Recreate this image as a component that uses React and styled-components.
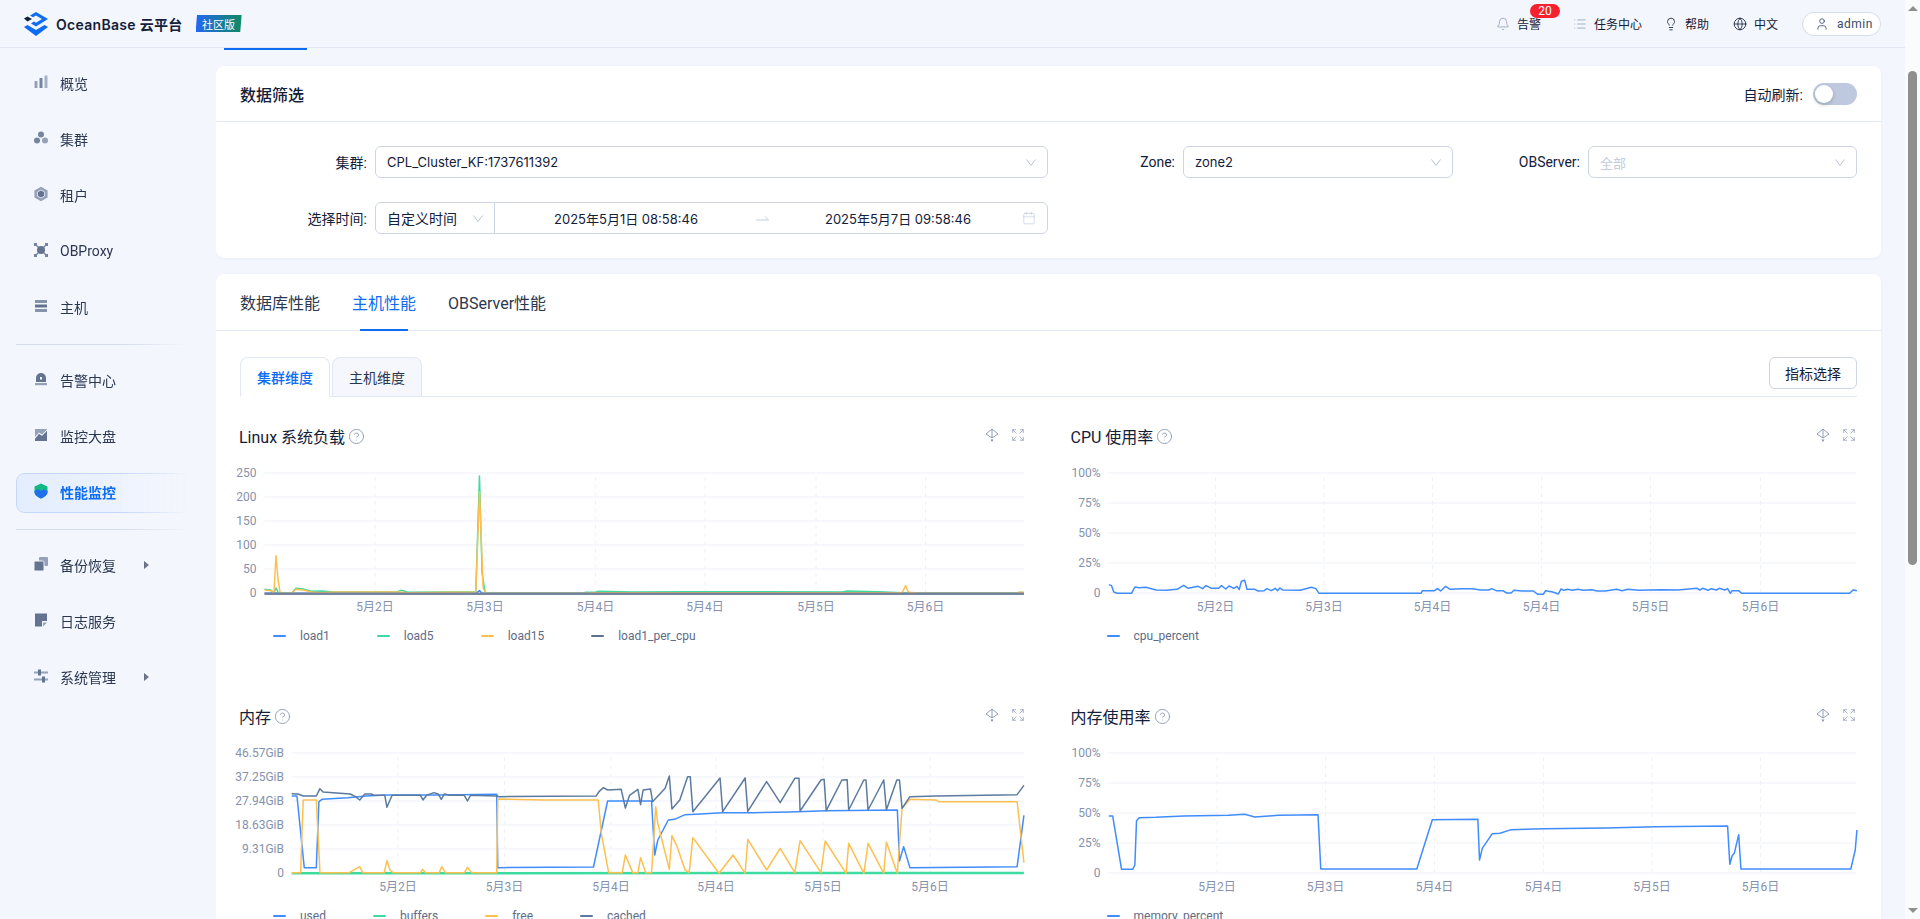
import React from "react"
import styled, { createGlobalStyle } from "styled-components"
import { Bell, List, Lightbulb, Globe, User, Calendar, CircleHelp, Expand } from "lucide-react"

const GlobalStyle = createGlobalStyle`
  html, body {
    margin: 0;
    height: 100%;
    overflow: hidden;
  }
  body {
    background: #f3f6fd;
    color: #132039;
    font-family: Roboto, "Noto Sans CJK SC", sans-serif;
    font-size: 14px;
  }
  * { box-sizing: border-box; }
`

const Shell = styled.div`
  display: flex;
  height: 100vh;
  overflow: hidden;
`

const Page = styled.div`
  flex: 1;
  min-width: 0;
  display: flex;
  flex-direction: column;
`

const TopBar = styled.header`
  height: 48px;
  flex: none;
  display: flex;
  align-items: center;
  justify-content: space-between;
  padding: 0 24px;
  border-bottom: 1px solid #e2e8f3;
`

const Brand = styled.div`
  display: flex;
  align-items: center;
`

const BrandName = styled.span`
  margin-left: 8px;
  font-family: Inter, "Noto Sans CJK SC", sans-serif;
  font-size: 14px;
  font-weight: 600;
  letter-spacing: 0.3px;
  color: #132039;
`

const EditionBadge = styled.span`
  margin-left: 13px;
  width: 46px;
  height: 17px;
  display: flex;
  align-items: center;
  justify-content: center;
  font-size: 11px;
  color: #fff;
  background: linear-gradient(90deg, #2468f2 0%, #0f8a5f 100%);
  clip-path: polygon(3% 0, 100% 0, 97% 100%, 0 100%);
`

const TopActions = styled.div`
  display: flex;
  align-items: center;
  font-size: 12px;
  color: #132039;
`

const TopAction = styled.div`
  position: relative;
  display: flex;
  align-items: center;
  gap: 7px;
  margin-right: ${(p) => p.$gap}px;
  color: ${(p) => p.$tone || "#132039"};

  span {
    color: #132039;
  }
`

const CountBadge = styled.b`
  position: absolute;
  top: -11px;
  left: 34px;
  width: 30px;
  height: 14px;
  border-radius: 7px;
  background: #f5222d;
  color: #fff;
  font-size: 12px;
  font-weight: 400;
  line-height: 14px;
  text-align: center;
`

const UserPill = styled.div`
  width: 79px;
  height: 24px;
  display: flex;
  align-items: center;
  gap: 8px;
  padding-left: 12px;
  border: 1px solid #d5dcea;
  border-radius: 12px;
  background: #fff;
  letter-spacing: 0.5px;
  color: #3a4a66;
`

const Body = styled.div`
  flex: 1;
  min-height: 0;
  display: flex;
`

const Sidebar = styled.nav`
  width: 216px;
  flex: none;
  padding: 8px 26px 0 16px;
`

const NavItem = styled.div`
  height: 56px;
  display: flex;
  align-items: center;
`

const NavInner = styled.div`
  width: 100%;
  height: 40px;
  display: flex;
  align-items: center;
  gap: 11px;
  padding: 0 0 2px 16px;
  border: 1px solid ${(p) => (p.$active ? "#c3d7fb" : "transparent")};
  border-radius: 8px;
  background: ${(p) => (p.$active ? "linear-gradient(90deg, #e3edfe 0%, #f3f6fd 100%)" : "none")};
  color: ${(p) => (p.$active ? "#0d6cf2" : "#2a3750")};
  font-weight: ${(p) => (p.$active ? 600 : 400)};
  mask-image: linear-gradient(90deg, #000 60%, transparent 100%);

  svg {
    margin-bottom: 2px;
  }
`

const NavArrow = styled.i`
  margin-left: 17px;
  width: 0;
  height: 0;
  border-left: 5px solid #1c2a44;
  border-top: 4px solid transparent;
  border-bottom: 4px solid transparent;
`

const NavDivider = styled.hr`
  height: 1px;
  margin: 8px 0;
  border: 0;
  background: linear-gradient(90deg, #d5dcea 0%, #d5dcea 60%, #f3f6fd 100%);
`

const Main = styled.main`
  flex: 1;
  min-width: 0;
  padding-right: 24px;
  overflow: hidden;
`

const PageTabInk = styled.div`
  width: 83px;
  height: 2px;
  margin: 0 0 16px 8px;
  background: #0d6cf2;
`

const Card = styled.section`
  background: #fff;
  border-radius: 8px;
  box-shadow: 0 1px 3px rgba(54, 69, 99, 0.06);
  margin-bottom: 16px;
`

const CardHead = styled.div`
  height: 56px;
  display: flex;
  align-items: center;
  justify-content: space-between;
  padding: 0 24px;
  border-bottom: 1px solid #e2e8f3;
`

const CardTitle = styled.h2`
  margin: 0;
  font-size: 16px;
  font-weight: 500;
`

const AutoRefresh = styled.div`
  display: flex;
  align-items: center;
  gap: 10px;
  font-size: 14px;
`

const Toggle = styled.div`
  width: 44px;
  height: 22px;
  padding: 2px;
  border-radius: 11px;
  background: #bec9df;

  &::before {
    content: "";
    display: block;
    width: 18px;
    height: 18px;
    border-radius: 50%;
    background: #fff;
    box-shadow: 0 2px 4px rgba(0, 35, 11, 0.2);
  }
`

const FilterGrid = styled.div`
  display: grid;
  grid-template-columns: 808px 405px 404px;
  row-gap: 24px;
  padding: 24px;
`

const Field = styled.div`
  display: grid;
  grid-template-columns: 135px 1fr;
  align-items: center;
`

const FieldLabel = styled.label`
  padding-right: 8px;
  text-align: right;
  font-size: 14px;
  color: #132039;
`

const SelectBox = styled.div`
  height: 32px;
  display: flex;
  align-items: center;
  justify-content: space-between;
  padding: 0 11px;
  border: 1px solid #cdd5e4;
  border-radius: 6px;
  font-family: Inter, "Noto Sans CJK SC", sans-serif;
  font-size: 13px;
  color: ${(p) => (p.$muted ? "#c3cbdc" : "#132039")};

  svg {
    color: #b8c2d6;
  }
`

const RangeBox = styled.div`
  height: 32px;
  display: flex;
  align-items: center;
  border: 1px solid #cdd5e4;
  border-radius: 6px;
  font-family: Inter, "Noto Sans CJK SC", sans-serif;
  font-size: 13px;
`

const RangeKind = styled.div`
  width: 119px;
  height: 100%;
  flex: none;
  display: flex;
  align-items: center;
  justify-content: space-between;
  padding: 0 11px;
  border-right: 1px solid #cdd5e4;
  font-size: 14px;

  svg {
    color: #b8c2d6;
  }
`

const RangeValue = styled.span`
  width: 246px;
  flex: none;
  text-align: center;

  &:first-of-type {
    margin-left: 8px;
  }
`

const RangeArrow = styled.span`
  width: 26px;
  flex: none;
  display: flex;
  justify-content: center;
  color: #c3cbdc;
`

const RangeIcon = styled.span`
  margin-left: 1px;
  flex: none;
  display: flex;
  color: #b8c2d6;
`

const MainTabs = styled.div`
  height: 57px;
  display: flex;
  gap: 32px;
  padding: 0 24px;
  border-bottom: 1px solid #e2e8f3;
`

const MainTab = styled.div`
  position: relative;
  display: flex;
  align-items: center;
  font-size: 16px;
  color: ${(p) => (p.$active ? "#0d6cf2" : "#2a3750")};

  &::after {
    content: "";
    display: ${(p) => (p.$active ? "block" : "none")};
    position: absolute;
    left: 8px;
    right: 8px;
    bottom: -1px;
    height: 2px;
    background: #0d6cf2;
  }
`

const TabPane = styled.div`
  padding: 26px 24px 0;
`

const SubTabBar = styled.div`
  display: flex;
  align-items: flex-start;
  gap: 2px;
  height: 40px;
  border-bottom: 1px solid #e2e8f3;
`

const SubTab = styled.div`
  width: 90px;
  height: 40px;
  display: flex;
  align-items: center;
  justify-content: center;
  border: 1px solid #e2e8f3;
  border-bottom: ${(p) => (p.$active ? "1px solid #fff" : "1px solid #e2e8f3")};
  border-radius: 8px 8px 0 0;
  background: ${(p) => (p.$active ? "#fff" : "#f5f7fc")};
  color: ${(p) => (p.$active ? "#0d6cf2" : "#2a3750")};
  font-weight: ${(p) => (p.$active ? 500 : 400)};
`

const PickButton = styled.button`
  margin-left: auto;
  width: 88px;
  height: 32px;
  padding: 0;
  border: 1px solid #cdd5e4;
  border-radius: 6px;
  background: #fff;
  color: #132039;
  font: inherit;
`

const ChartGrid = styled.div`
  display: grid;
  grid-template-columns: 1fr 1fr;
  column-gap: 46px;
  padding-top: 28px;
`

const ChartPanel = styled.div`
  height: 280px;
`

const ChartHead = styled.div`
  height: 22px;
  display: flex;
  align-items: center;
  gap: 3px;
  margin: 0 0 13px -1px;
  font-size: 16px;
  color: #132039;
`

const HelpMark = styled(CircleHelp)`
  color: #7d8aa6;
`

const ChartTools = styled.div`
  margin: 0 1px 3px auto;
  display: flex;
  align-items: center;
  gap: 12px;
  color: #8592ad;
`

const ChartSvg = styled.svg`
  display: block;
  width: 100%;
  height: 160px;
  overflow: visible;

  text {
    font-size: 12px;
    fill: #8592ad;
  }
`

const Legend = styled.div`
  display: flex;
  gap: 47px;
  height: 18px;
  margin-top: 7px;
  padding-left: ${(p) => p.$indent}px;
  font-size: 12px;
  color: #5e6b86;
`

const LegendItem = styled.div`
  display: flex;
  align-items: center;
  gap: 14px;

  &::before {
    content: "";
    width: 13px;
    height: 2px;
    border-radius: 1px;
    background: ${(p) => p.$color};
  }
`

const ScrollTrack = styled.div`
  width: 15px;
  flex: none;
  display: flex;
  flex-direction: column;
  align-items: center;
  padding: 6px 0;
  background: #fafbfc;
`

const ScrollUp = styled.i`
  width: 0;
  height: 0;
  border-left: 5px solid transparent;
  border-right: 5px solid transparent;
  border-bottom: 5px solid #8f8f8f;
`

const ScrollDown = styled.i`
  margin-top: auto;
  width: 0;
  height: 0;
  border-left: 5px solid transparent;
  border-right: 5px solid transparent;
  border-top: 5px solid #8f8f8f;
`

const ScrollThumb = styled.div`
  width: 9px;
  height: 494px;
  margin-top: 60px;
  border-radius: 5px;
  background: #8f8f8f;
`

const NavSvg = ({ children }) => (
  <svg width="16" height="16" viewBox="0 0 16 16" fill="#76859f">
    {children}
  </svg>
)

const icons = {
  overview: (
    <NavSvg>
      <rect x="1.5" y="7" width="3" height="7" rx="0.5" fill="#94a1b8" />
      <rect x="6.5" y="4" width="3" height="10" rx="0.5" />
      <rect x="11.5" y="1.5" width="3" height="12.5" rx="0.5" fill="#a5b1c6" />
    </NavSvg>
  ),
  cluster: (
    <NavSvg>
      <circle cx="8" cy="4.5" r="3" />
      <circle cx="4" cy="10.5" r="3" />
      <circle cx="12" cy="10.5" r="3" fill="#94a1b8" />
    </NavSvg>
  ),
  tenant: (
    <NavSvg>
      <path d="M8 .8 14.6 4.4v7.2L8 15.2 1.4 11.6V4.4z" fill="#94a1b8" />
      <path d="M8 4 11.6 6v4L8 12 4.4 10V6z" fill="#64738f" stroke="#dbe2ee" />
    </NavSvg>
  ),
  proxy: (
    <NavSvg>
      <path d="M2.5 2.5 13.5 13.5M13.5 2.5 2.5 13.5" stroke="#76859f" strokeWidth="1.4" />
      <circle cx="8" cy="8" r="4" fill="#64738f" />
      <rect x="1" y="1" width="3" height="3" />
      <rect x="12" y="1" width="3" height="3" />
      <rect x="1" y="12" width="3" height="3" />
      <rect x="12" y="12" width="3" height="3" />
    </NavSvg>
  ),
  host: (
    <NavSvg>
      <rect x="2" y="2" width="12" height="3" fill="#8593ab" />
      <rect x="2" y="6.5" width="12" height="3" fill="#64738f" />
      <rect x="2" y="11" width="12" height="3" fill="#8593ab" />
    </NavSvg>
  ),
  alarm: (
    <NavSvg>
      <path d="M3 11V7a5 5 0 0 1 10 0v4z" fill="#64738f" />
      <rect x="7" y="6" width="2" height="2.5" fill="#f3f6fd" />
      <rect x="2" y="12" width="12" height="2.2" fill="#94a1b8" />
    </NavSvg>
  ),
  board: (
    <NavSvg>
      <rect x="2" y="2" width="12" height="12" fill="#94a1b8" />
      <path d="M2 12 6 7l3 2 5-5v-1.5L9 7.5 6 5.5 2 10z" fill="#f3f6fd" />
      <path d="M2 14v-2l4-5 3 2 5-5v10z" fill="#64738f" />
    </NavSvg>
  ),
  monitor: (
    <NavSvg>
      <path d="M8 .5 14.5 3.500v5.500c0 3-3 5-6.500 6.500C4.500 14 1.500 12 1.500 9V3.500z" fill="#12b886" />
      <path d="M1.500 8 5 6.300 8 8l3-1.700 3.500 1.700V9c0 3-3 5-6.500 6.500C4.500 14 1.500 12 1.500 9z" fill="#1f6fef" />
    </NavSvg>
  ),
  backup: (
    <NavSvg>
      <rect x="6" y="1" width="9" height="9" rx="1" fill="#94a1b8" />
      <rect x="1" y="5" width="10" height="10" rx="1.500" fill="#64738f" stroke="#f3f6fd" />
    </NavSvg>
  ),
  log: (
    <NavSvg>
      <path d="M2 1.500h12V9H9v5.500H2z" fill="#64738f" />
      <path d="M10 10.500h4L10 14.500z" fill="#94a1b8" />
    </NavSvg>
  ),
  system: (
    <NavSvg>
      <rect x="1" y="3.500" width="14" height="2" fill="#94a1b8" />
      <rect x="5" y="1.500" width="3" height="6" fill="#64738f" />
      <rect x="1" y="10.500" width="14" height="2" fill="#94a1b8" />
      <rect x="9" y="8.500" width="3" height="6" fill="#64738f" />
    </NavSvg>
  ),
}

const navGroups = [
  [
    { key: "overview", label: "概览" },
    { key: "cluster", label: "集群" },
    { key: "tenant", label: "租户" },
    { key: "proxy", label: "OBProxy" },
    { key: "host", label: "主机" },
  ],
  [
    { key: "alarm", label: "告警中心" },
    { key: "board", label: "监控大盘" },
    { key: "monitor", label: "性能监控", active: true },
  ],
  [
    { key: "backup", label: "备份恢复", arrow: true },
    { key: "log", label: "日志服务" },
    { key: "system", label: "系统管理", arrow: true },
  ],
]

const Logo = () => (
  <svg width="24" height="24" viewBox="0 0 24 24">
    <path d="M12 0 24 7 12 14.500 7 11.500l3-2 2 1.200L18 7 12 3.500 9 5.300 6 3.500z" fill="#0d6cf2" />
    <path d="M0 6.500 3.500 4.500 8 7 3.500 9.500z" fill="#132039" />
    <path d="M0 15 3.500 13 12 18 20.500 13 24 15 12 24z" fill="#0d6cf2" />
  </svg>
)

const DragIcon = () => (
  <svg width="14" height="16" viewBox="0 0 14 16" fill="none" stroke="currentColor" strokeWidth="0.9">
    <path d="M7 2 13 7 7 11 1 7zM7 2v9" />
    <path d="M5.500 12.500h3L7 15z" fill="currentColor" stroke="none" />
  </svg>
)

const SelectArrow = () => (
  <svg width="10" height="7" viewBox="0 0 10 7" fill="none" stroke="currentColor">
    <path d="M.5 .5 5 6.500 9.500 .5" />
  </svg>
)

const RangeDash = () => (
  <svg width="13" height="6" viewBox="0 0 13 6" fill="none" stroke="currentColor">
    <path d="M0 5h12.500M9 1.500 12.500 5" />
  </svg>
)

const AXIS_BASE = 133

const charts = [
  {
    title: "Linux 系统负载",
    plot: [24.5, 784],
    yTicks: ["250", "200", "150", "100", "50", "0"],
    xTicks: [135, 245, 355.6, 465, 576, 685.6],
    indent: 33,
    trace: "translate(-10,-40) scale(0.523,0.3333)",
    legend: [
      ["load1", "#3f8cff"],
      ["load5", "#3ddba0"],
      ["load15", "#fdc04f"],
      ["load1_per_cpu", "#5c7090"],
    ],
    series: [
      ["#3f8cff", "66,520 88,519 92,520 470,520 477,512 482,520 1518,520"],
      ["#3ddba0", "66,508 78,510 84,518 88,504 93,520 118,520 126,505 140,507 155,514 175,513 200,516 320,515 328,511 340,517 470,515 477,168 482,460 488,520 675,520 680,517 700,516 705,514 770,516 875,515 1170,516 1180,513 1240,515 1285,518 1297,520 1505,520 1510,517 1518,518"],
      ["#fdc04f", "66,510 78,512 84,518 88,407 92,480 96,520 118,520 126,508 140,510 155,516 175,518 200,516 320,516 340,518 470,516 477,215 484,505 490,520 680,520 700,518 1285,518 1292,497 1297,517 1315,519 1330,520 1505,520 1510,517 1518,517"],
      ["#75849e", "66,521 1518,521", 2.5],
    ],
  },
  {
    title: "CPU 使用率",
    plot: [36.5, 784.5],
    yTicks: ["100%", "75%", "50%", "25%", "0"],
    xTicks: [143.5, 252, 360.5, 469.5, 578.5, 688.5],
    indent: 35,
    trace: "translate(-21.5,-40) scale(0.555,0.3333)",
    legend: [["cpu_percent", "#3f8cff"]],
    series: [
      ["#3f8cff", "105,494 110,497 114,516 120,520 146,520 152,501 160,503 172,502 190,510 208,511 228,508 240,496 248,505 266,499 274,506 280,497 290,505 303,505 308,497 316,507 322,498 330,505 336,499 340,509 344,484 350,481 354,508 368,508 374,513 385,512 390,506 398,512 405,505 409,512 413,504 418,510 450,511 470,502 478,506 484,520 668,520 670,512 692,512 697,506 703,513 712,499 720,508 740,506 760,506 775,510 790,510 795,506 803,512 815,512 822,519 830,519 835,511 850,513 870,513 878,523 888,523 892,512 905,516 915,522 920,507 925,511 932,508 940,511 950,508 960,511 975,509 985,513 1000,513 1020,508 1030,512 1040,508 1060,511 1100,509 1130,510 1150,507 1165,505 1170,510 1175,505 1185,511 1190,506 1200,510 1205,505 1215,510 1220,506 1225,520 1228,512 1240,512 1245,520 1440,520 1446,510 1453,512"],
    ],
  },
  {
    title: "内存",
    plot: [52, 784],
    yTicks: ["46.57GiB", "37.25GiB", "27.94GiB", "18.63GiB", "9.31GiB", "0"],
    xTicks: [158, 264.6, 371, 476, 583, 690],
    indent: 33,
    trace: "translate(-10,-50) scale(0.523,0.3333)",
    legend: [
      ["used", "#3f8cff"],
      ["buffers", "#3ddba0"],
      ["free", "#fdc04f"],
      ["cached", "#5c7a9f"],
    ],
    series: [
      ["#3f8cff", "118,318 128,318 142,533 165,533 170,335 176,328 225,323 260,318 300,315 400,315 510,313 512,533 695,531 722,333 806,333 812,495 818,450 838,390 850,388 870,374 900,372 940,368 1000,368 1070,366 1140,362 1276,360 1280,513 1288,470 1300,533 1505,530 1518,376"],
      ["#3ddba0", "118,550 1518,549", 2.5],
      ["#fdc04f", "118,548 135,548 140,330 165,330 172,548 228,548 248,530 254,548 295,548 300,512 306,540 312,548 364,548 368,538 374,548 400,548 405,530 412,548 448,548 454,532 462,548 510,548 512,327 600,330 704,330 710,430 724,548 750,548 756,495 770,548 780,548 785,503 795,548 806,548 814,350 818,400 840,538 845,437 855,470 870,540 878,548 885,443 935,550 962,495 985,550 990,448 1026,540 1052,475 1080,548 1090,452 1130,548 1138,453 1178,550 1183,460 1212,550 1220,460 1250,550 1255,456 1276,550 1285,355 1300,328 1350,330 1355,335 1505,335 1518,518"],
      ["#5c7a9f", "118,311 130,312 140,318 165,318 172,296 178,306 230,312 240,320 248,330 258,312 270,312 276,316 296,316 300,352 310,316 364,316 369,330 376,316 390,308 398,312 404,328 410,312 420,316 448,316 454,333 460,316 510,318 515,320 700,318 706,304 714,293 722,300 748,298 756,354 764,316 780,298 785,344 790,300 804,297 808,335 832,295 840,258 845,357 860,330 875,260 880,260 885,365 937,264 942,365 985,264 990,364 1026,275 1052,338 1080,265 1088,265 1090,363 1130,270 1136,268 1140,362 1170,270 1180,269 1183,360 1212,270 1216,270 1220,360 1250,270 1255,360 1275,270 1280,270 1285,355 1300,320 1350,318 1505,314 1518,286"],
    ],
  },
  {
    title: "内存使用率",
    plot: [36.5, 784.5],
    yTicks: ["100%", "75%", "50%", "25%", "0"],
    xTicks: [145, 253.5, 362.5, 471.5, 580, 688.5],
    indent: 35,
    trace: "translate(-21.5,-50) scale(0.555,0.3333)",
    legend: [["memory_percent", "#3f8cff"]],
    series: [
      ["#3f8cff", "105,378 112,378 128,538 148,538 152,525 155,392 160,383 190,382 240,378 320,376 350,373 368,381 410,376 482,374 487,537 660,537 688,389 770,388 773,510 778,475 796,431 810,430 830,419 890,416 1000,414 1090,410 1220,408 1224,523 1228,498 1232,490 1240,434 1244,537 1442,537 1450,480 1453,420"],
    ],
  },
]

const xLabels = ["5月2日", "5月3日", "5月4日", "5月4日", "5月5日", "5月6日"]

const ChartCard = ({ chart }) => {
  const [left, right] = chart.plot
  const step = 120 / (chart.yTicks.length - 1)
  return (
    <ChartPanel>
      <ChartHead>
        {chart.title}
        <HelpMark size={17} strokeWidth={1.1} />
        <ChartTools>
          <DragIcon />
          <Expand size={14} strokeWidth={1.2} />
        </ChartTools>
      </ChartHead>
      <ChartSvg viewBox="0 0 785.5 160">
        {chart.yTicks.map((label, i) => (
          <g key={label}>
            <line x1={left} x2={right} y1={13 + i * step} y2={13 + i * step} stroke="#f4f6fa" strokeWidth="1.5" />
            <text x={left - 8} y={17 + i * step} textAnchor="end">
              {label}
            </text>
          </g>
        ))}
        {chart.xTicks.map((x, i) => (
          <g key={x}>
            <line x1={x} x2={x} y1={17} y2={AXIS_BASE} stroke="#eef0f5" strokeDasharray="4 4" />
            <text x={x} y={151} textAnchor="middle">
              {xLabels[i]}
            </text>
          </g>
        ))}
        <g transform={chart.trace}>
          {chart.series.map(([color, points, width]) => (
            <polyline
              key={color}
              points={points}
              fill="none"
              stroke={color}
              strokeWidth={width || 1.5}
              strokeLinejoin="round"
              vectorEffect="non-scaling-stroke"
            />
          ))}
        </g>
      </ChartSvg>
      <Legend $indent={chart.indent}>
        {chart.legend.map(([name, color]) => (
          <LegendItem key={name} $color={color}>
            {name}
          </LegendItem>
        ))}
      </Legend>
    </ChartPanel>
  )
}

const App = () => {
  return (
    <Shell>
      <GlobalStyle />
      <Page>
        <TopBar>
          <Brand>
            <Logo />
            <BrandName>OceanBase 云平台</BrandName>
            <EditionBadge>社区版</EditionBadge>
          </Brand>
          <TopActions>
            <TopAction $gap={32} $tone="#8592ad">
              <Bell size={14} strokeWidth={1.2} />
              <span>告警</span>
              <CountBadge>20</CountBadge>
            </TopAction>
            <TopAction $gap={22} $tone="#8592ad">
              <List size={14} strokeWidth={1.2} />
              <span>任务中心</span>
            </TopAction>
            <TopAction $gap={24}>
              <Lightbulb size={14} strokeWidth={1.4} />
              <span>帮助</span>
            </TopAction>
            <TopAction $gap={24}>
              <Globe size={14} strokeWidth={1.4} />
              <span>中文</span>
            </TopAction>
            <UserPill>
              <User size={14} strokeWidth={1.4} />
              admin
            </UserPill>
          </TopActions>
        </TopBar>
        <Body>
          <Sidebar>
            {navGroups.map((group, g) => (
              <div key={g}>
                {g > 0 && <NavDivider />}
                {group.map((item) => (
                  <NavItem key={item.key}>
                    <NavInner $active={item.active}>
                      {icons[item.key]}
                      {item.label}
                      {item.arrow && <NavArrow />}
                    </NavInner>
                  </NavItem>
                ))}
              </div>
            ))}
          </Sidebar>
          <Main>
            <PageTabInk />
            <Card>
              <CardHead>
                <CardTitle>数据筛选</CardTitle>
                <AutoRefresh>
                  自动刷新:
                  <Toggle />
                </AutoRefresh>
              </CardHead>
              <FilterGrid>
                <Field>
                  <FieldLabel>集群:</FieldLabel>
                  <SelectBox>
                    CPL_Cluster_KF:1737611392
                    <SelectArrow />
                  </SelectBox>
                </Field>
                <Field>
                  <FieldLabel>Zone:</FieldLabel>
                  <SelectBox>
                    zone2
                    <SelectArrow />
                  </SelectBox>
                </Field>
                <Field>
                  <FieldLabel>OBServer:</FieldLabel>
                  <SelectBox $muted>
                    全部
                    <SelectArrow />
                  </SelectBox>
                </Field>
                <Field>
                  <FieldLabel>选择时间:</FieldLabel>
                  <RangeBox>
                    <RangeKind>
                      自定义时间
                      <SelectArrow />
                    </RangeKind>
                    <RangeValue>2025年5月1日 08:58:46</RangeValue>
                    <RangeArrow>
                      <RangeDash />
                    </RangeArrow>
                    <RangeValue>2025年5月7日 09:58:46</RangeValue>
                    <RangeIcon>
                      <Calendar size={14} strokeWidth={1} />
                    </RangeIcon>
                  </RangeBox>
                </Field>
              </FilterGrid>
            </Card>
            <Card>
              <MainTabs>
                <MainTab>数据库性能</MainTab>
                <MainTab $active>主机性能</MainTab>
                <MainTab>OBServer性能</MainTab>
              </MainTabs>
              <TabPane>
                <SubTabBar>
                  <SubTab $active>集群维度</SubTab>
                  <SubTab>主机维度</SubTab>
                  <PickButton>指标选择</PickButton>
                </SubTabBar>
                <ChartGrid>
                  {charts.map((chart) => (
                    <ChartCard key={chart.title} chart={chart} />
                  ))}
                </ChartGrid>
              </TabPane>
            </Card>
          </Main>
        </Body>
      </Page>
      <ScrollTrack>
        <ScrollUp />
        <ScrollThumb />
        <ScrollDown />
      </ScrollTrack>
    </Shell>
  )
}

export default App
